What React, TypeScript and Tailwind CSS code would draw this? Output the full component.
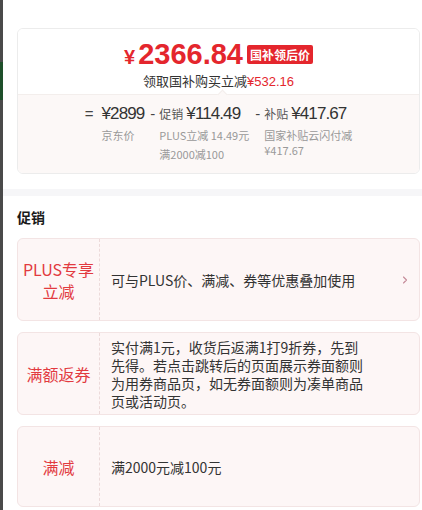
import { ChevronRight } from "lucide-react";

const cjk = "font-['Noto_Sans_CJK_SC',sans-serif]";
const num = "font-['Liberation_Sans','Noto_Sans_CJK_SC',sans-serif]";

const promos = [
  {
    tag: ["PLUS专享", "立减"],
    text: "可与PLUS价、满减、券等优惠叠加使用",
    arrow: true,
    h: "h-[83px]",
  },
  {
    tag: ["满额返券"],
    text: "实付满1元，收货后返满1打9折券，先到先得。若点击跳转后的页面展示券面额则为用券商品页，如无券面额则为凑单商品页或活动页。",
    arrow: false,
    h: "h-[83px]",
  },
  {
    tag: ["满减"],
    text: "满2000元减100元",
    arrow: false,
    h: "h-[81px]",
  },
];

const PriceCard = () => (
  <div className="relative rounded-[6px] border border-[#ececec] overflow-hidden">
    {/* final price */}
    <div className="h-[65px] bg-white flex flex-col items-center pt-[11px]">
      <div className="flex items-center">
        <span className={`${num} text-[#e4262d] text-[20px] font-bold leading-none mt-[4px]`}>¥</span>
        <span className={`${num} text-[#e4262d] text-[29px] font-bold leading-none ml-[3px]`}>2366.84</span>
        <span className={`${cjk} ml-[4px] bg-[#e4262d] text-white text-[12px] font-bold leading-[19px] px-[3px] rounded-[2px]`}>
          国补领后价
        </span>
      </div>
      <div className={`${cjk} mt-[3px] text-[13px] leading-[18px] text-[#333]`}>
        领取国补购买立减<span className={`${num} text-[#e4262d]`}>¥532.16</span>
      </div>
    </div>

    {/* breakdown */}
    <div className="relative h-[79px] bg-[#fcf8f7] border-t border-[#f3eeec] flex justify-center pt-[8px]">
      <div className="absolute -top-[4px] left-[201px] w-[7px] h-[7px] rotate-45 bg-[#fcf8f7] border-l border-t border-[#f3eeec]" />
      <div className="flex items-start">
        <span className={`${num} text-[15px] leading-[22px] text-[#444] mr-[8px]`}>=</span>
        <div className="flex flex-col">
          <span className={`${num} text-[17px] tracking-[-0.9px] leading-[22px] text-[#333]`}>¥2899</span>
          <span className={`${cjk} text-[11px] leading-[18px] text-[#999] mt-[1px]`}>京东价</span>
        </div>
        <span className={`${num} text-[15px] leading-[22px] text-[#444] ml-[6px] mr-[4px]`}>-</span>
        <div className="flex flex-col">
          <div className="flex items-baseline">
            <span className={`${cjk} text-[12px] text-[#555] mr-[3px]`}>促销</span>
            <span className={`${num} text-[17px] tracking-[-0.9px] leading-[22px] text-[#333]`}>¥114.49</span>
          </div>
          <span className={`${cjk} text-[11px] leading-[18px] text-[#999] mt-[1px]`}>PLUS立减 14.49元</span>
          <span className={`${cjk} text-[11px] leading-[18px] text-[#999] mt-[1px]`}>满2000减100</span>
        </div>
        <span className={`${num} text-[15px] leading-[22px] text-[#444] ml-[6px] mr-[4px]`}>-</span>
        <div className="flex flex-col">
          <div className="flex items-baseline">
            <span className={`${cjk} text-[12px] text-[#555] mr-[3px]`}>补贴</span>
            <span className={`${num} text-[17px] tracking-[-0.9px] leading-[22px] text-[#333]`}>¥417.67</span>
          </div>
          <span className={`${cjk} text-[11px] leading-[15px] text-[#999] mt-[3px]`}>国家补贴云闪付减</span>
          <span className={`${cjk} text-[11px] leading-[15px] text-[#999]`}>¥417.67</span>
        </div>
      </div>
    </div>
  </div>
);

const PromoCard = ({ p }: { p: (typeof promos)[number] }) => (
  <div className={`${p.h} flex rounded-[6px] border border-[#f3e4e4] bg-[#fdf6f6] overflow-hidden`}>
    <div className="w-[82px] shrink-0 flex flex-col items-center justify-center border-r border-dashed border-[#ecdada]">
      {p.tag.map((t) => (
        <span key={t} className={`${cjk} text-[16px] leading-[22px] text-[#e23a3f]`}>
          {t}
        </span>
      ))}
    </div>
    <div className="flex-1 flex items-center pl-[11px] pr-[8px]">
      <p className={`${cjk} w-[255px] text-[14px] leading-[18px] text-[#333]`}>{p.text}</p>
      {p.arrow && <ChevronRight size={12} strokeWidth={2.25} className="ml-auto text-[#c48a98]" />}
    </div>
  </div>
);

export default function App() {
  return (
    <div className="w-[422px] h-[510px] bg-white flex overflow-hidden">
      {/* page behind the sheet */}
      <div className="w-[3px] shrink-0 flex flex-col bg-[#4a4a4a]">
        <div className="h-[62px]" />
        <div className="h-[38px] bg-[#1e4f2a]" />
      </div>

      <div className="flex-1 flex flex-col">
        <div className="pl-[14px] pr-[2px] pt-[28px]">
          <PriceCard />
        </div>

        <div className="mt-[15px] h-[7px] bg-[#f6f6f8]" />

        <div className="pl-[14px] pr-[2px]">
          <div className={`${cjk} h-[42px] flex items-center text-[14px] font-bold text-[#1a1a1a]`}>促销</div>
          <div className="flex flex-col gap-[11px]">
            {promos.map((p) => (
              <PromoCard key={p.tag[0]} p={p} />
            ))}
          </div>
        </div>
      </div>
    </div>
  );
}
